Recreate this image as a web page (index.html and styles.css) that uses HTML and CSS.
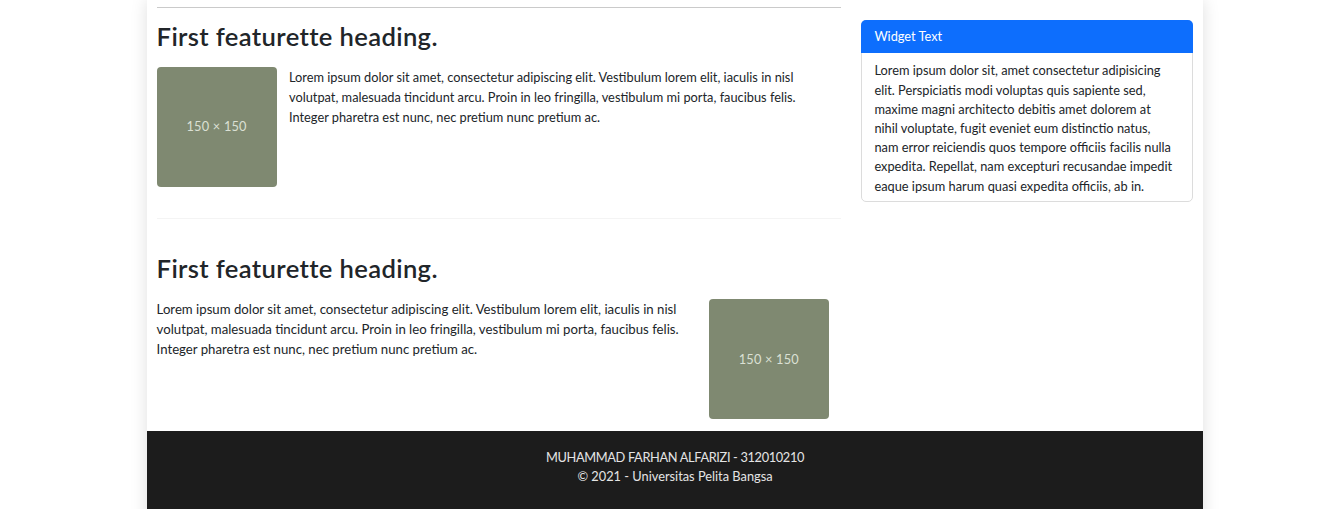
FILE: index.html
```html
<!DOCTYPE html>
<html lang="id">
<head>
<meta charset="utf-8">
<title>Featurette</title>
<link rel="stylesheet" href="styles.css">
</head>
<body>
<div class="page">
  <div class="main">
    <section class="content">
      <hr class="rule">
      <h2 class="feat-heading">First featurette heading.</h2>
      <div class="media">
        <div class="thumb">150 × 150</div>
        <p class="feat-text">Lorem ipsum dolor sit amet, consectetur adipiscing elit. Vestibulum lorem elit, iaculis in nisl volutpat, malesuada tincidunt arcu. Proin in leo fringilla, vestibulum mi porta, faucibus felis. Integer pharetra est nunc, nec pretium nunc pretium ac.</p>
      </div>
      <hr class="divider">
      <h2 class="feat-heading">First featurette heading.</h2>
      <div class="media media-right">
        <p class="feat-text feat-text-wide">Lorem ipsum dolor sit amet, consectetur adipiscing elit. Vestibulum lorem elit, iaculis in nisl volutpat, malesuada tincidunt arcu. Proin in leo fringilla, vestibulum mi porta, faucibus felis. Integer pharetra est nunc, nec pretium nunc pretium ac.</p>
        <div class="thumb thumb-right">150 × 150</div>
      </div>
    </section>
    <aside class="sidebar">
      <div class="card">
        <div class="card-header">Widget Text</div>
        <div class="card-body">Lorem ipsum dolor sit, amet consectetur adipisicing elit. Perspiciatis modi voluptas quis sapiente sed, maxime magni architecto debitis amet dolorem at nihil voluptate, fugit eveniet eum distinctio natus, nam error reiciendis quos tempore officiis facilis nulla expedita. Repellat, nam excepturi recusandae impedit eaque ipsum harum quasi expedita officiis, ab in.</div>
      </div>
    </aside>
  </div>
  <footer class="footer">
    <p class="footer-name">MUHAMMAD FARHAN ALFARIZI - 312010210</p>
    <p>© 2021 - Universitas Pelita Bangsa</p>
  </footer>
</div>
</body>
</html>
```

FILE: styles.css
```css
* { box-sizing: border-box; }

html, body {
  margin: 0;
  background: #fff;
}

body {
  padding-left: 11px;
  font-family: "Lato", "Open Sans", sans-serif;
  font-size: 12.8px;
  line-height: 19.2px;
  color: #212529;
}

.page {
  width: 1056px;
  margin: 0 auto;
  background: #fff;
  box-shadow: 0 0 16px rgba(0, 0, 0, 0.13);
}

.main {
  display: grid;
  grid-template-columns: 684.8px 332.8px;
  column-gap: 19.2px;
  padding: 0 9.6px 12px;
}

.rule {
  margin: 7px 0 0;
  border: 0;
  border-top: 1px solid #cacaca;
}

.feat-heading {
  margin: 13px 0 15px;
  font-size: 25.6px;
  line-height: 31px;
  font-weight: 600;
  letter-spacing: 0.36px;
  color: #212529;
}

.media {
  display: flex;
  align-items: flex-start;
  gap: 12.4px;
}

.media-right {
  justify-content: space-between;
}

.thumb {
  flex: 0 0 120px;
  width: 120px;
  height: 120px;
  border-radius: 4px;
  background: #7f8971;
  color: #dbe0d4;
  font-size: 12.8px;
  letter-spacing: 0.2px;
  display: flex;
  align-items: center;
  justify-content: center;
}

.thumb-right {
  margin-right: 12.6px;
}

.feat-text {
  margin: 0;
  max-width: 516px;
  line-height: 20px;
}

.feat-text-wide {
  font-size: 13.2px;
  max-width: 535px;
}

.divider {
  margin: 31px 0 34.3px;
  border: 0;
  border-top: 1px solid #f4f4f4;
}

.sidebar {
  padding-top: 20px;
}

.card {
  border: 1px solid #dcdcdc;
  border-radius: 5px;
}

.card-header {
  margin: -1px -1px 0;
  padding: 6.9px 13.8px;
  background: #0d6efd;
  color: #fff;
  border-radius: 5px 5px 0 0;
}

.card-body {
  padding: 8.4px 16.5px 5.6px 12.8px;
}

.footer {
  background: #1c1c1c;
  color: #e4e4e4;
  text-align: center;
  padding: 16.4px 0 40px;
}

.footer p {
  margin: 0;
}

.footer-name {
  letter-spacing: -0.35px;
}
```
